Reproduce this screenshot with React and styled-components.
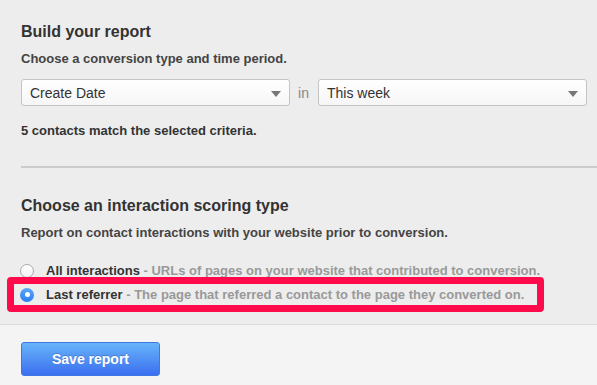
import React from 'react';
import styled, { createGlobalStyle } from 'styled-components';

const GlobalStyle = createGlobalStyle`
  html, body {
    margin: 0;
    padding: 0;
    background: #ededed;
  }
  body {
    font-family: 'Liberation Sans', Arial, sans-serif;
    color: #333;
  }
`;

const options = [
  {
    id: 'all',
    label: 'All interactions',
    hint: 'URLs of pages on your website that contributed to conversion.',
    checked: false,
  },
  {
    id: 'last',
    label: 'Last referrer',
    hint: 'The page that referred a contact to the page they converted on.',
    checked: true,
    highlighted: true,
  },
];

const Select = ({ value }) => (
  <SelectBox>
    <span>{value}</span>
    <Caret />
  </SelectBox>
);

const App = () => (
  <Page>
    <GlobalStyle />
    <Section>
      <Heading>Build your report</Heading>
      <Lead>Choose a conversion type and time period.</Lead>
      <SelectRow>
        <Select value="Create Date" />
        <InWord>in</InWord>
        <Select value="This week" />
      </SelectRow>
      <Matches>5 contacts match the selected criteria.</Matches>
    </Section>

    <Divider />

    <Section>
      <Heading>Choose an interaction scoring type</Heading>
      <Lead>Report on contact interactions with your website prior to conversion.</Lead>
      <OptionList>
        {options.map(({ id, label, hint, checked, highlighted }) => (
          <Option key={id} $highlighted={highlighted}>
            <Radio $checked={checked} />
            <OptionText>
              <strong>{label}</strong>
              <Hint> - {hint}</Hint>
            </OptionText>
          </Option>
        ))}
      </OptionList>
    </Section>

    <Footer>
      <SaveButton>Save report</SaveButton>
    </Footer>
  </Page>
);

const Page = styled.div`
  width: 597px;
  height: 385px;
  overflow: hidden;
  display: flex;
  flex-direction: column;
`;

const Section = styled.div`
  padding: 0 10px 0 21px;
`;

const Heading = styled.h2`
  margin: 0;
  padding-top: 22px;
  font-size: 16px;
  line-height: 20px;
  font-weight: bold;
  color: #333;
`;

const Lead = styled.p`
  margin: 8px 0 0;
  font-size: 13px;
  line-height: 17px;
  font-weight: bold;
  color: #444;
`;

const SelectRow = styled.div`
  display: flex;
  align-items: center;
  margin-top: 12px;
`;

const SelectBox = styled.div`
  flex: 1;
  height: 27px;
  box-sizing: border-box;
  display: flex;
  align-items: center;
  justify-content: space-between;
  padding: 0 8px;
  border: 1px solid #c4c4c4;
  border-radius: 3px;
  background: linear-gradient(#ffffff, #f6f6f6);
  font-size: 14px;
  color: #333;
`;

const Caret = styled.span`
  width: 0;
  height: 0;
  border-left: 5px solid transparent;
  border-right: 5px solid transparent;
  border-top: 6px solid #777;
  margin-top: 2px;
`;

const InWord = styled.span`
  margin: 0 9px 0 8px;
  font-size: 14px;
  color: #888;
`;

const Matches = styled.p`
  margin: 16px 0 0;
  font-size: 13px;
  line-height: 17px;
  font-weight: bold;
  color: #333;
`;

const Divider = styled.hr`
  margin: 27px 0 6px 21px;
  border: 0;
  border-top: 2px solid #cbcbcb;
  height: 0;
`;

const OptionList = styled.div`
  display: flex;
  flex-direction: column;
  gap: 7px;
  margin-top: 21px;
`;

const Option = styled.div`
  position: relative;
  display: flex;
  align-items: center;
  gap: 12px;
  height: 17px;
  margin-left: -1px;

  &::before {
    content: '';
    display: ${({ $highlighted }) => ($highlighted ? 'block' : 'none')};
    position: absolute;
    left: -13px;
    top: -9px;
    width: 537px;
    height: 35px;
    box-sizing: border-box;
    border: 7px solid #ff0a4a;
    border-radius: 4px;
  }
`;

const Radio = styled.span`
  width: 14px;
  height: 14px;
  box-sizing: border-box;
  border-radius: 50%;
  flex-shrink: 0;
  display: flex;
  align-items: center;
  justify-content: center;
  border: ${({ $checked }) => ($checked ? '0' : '1px solid #aaa')};
  background: ${({ $checked }) =>
    $checked ? 'linear-gradient(#5aa8f8, #2a7ef0)' : 'linear-gradient(#fff, #f2f2f2)'};

  &::after {
    content: '';
    display: ${({ $checked }) => ($checked ? 'block' : 'none')};
    width: 5px;
    height: 5px;
    border-radius: 50%;
    background: #fff;
  }
`;

const OptionText = styled.span`
  font-size: 13px;
  font-weight: bold;
  color: #333;
  white-space: nowrap;
`;

const Hint = styled.span`
  color: #999;
`;

const Footer = styled.div`
  flex: 1;
  margin-top: 21px;
  border-top: 1px solid #dcdcdc;
  background: #f4f4f4;
  padding: 17px 21px 0;
`;

const SaveButton = styled.button`
  width: 139px;
  height: 34px;
  border: 1px solid #3f78e6;
  border-radius: 3px;
  background: linear-gradient(#68b4fa, #3b6ff0);
  color: #fff;
  font-family: 'Liberation Sans', Arial, sans-serif;
  font-size: 14px;
  font-weight: bold;
  text-shadow: 0 -1px 0 rgba(0, 0, 0, 0.2);
  cursor: pointer;
`;

export default App;
